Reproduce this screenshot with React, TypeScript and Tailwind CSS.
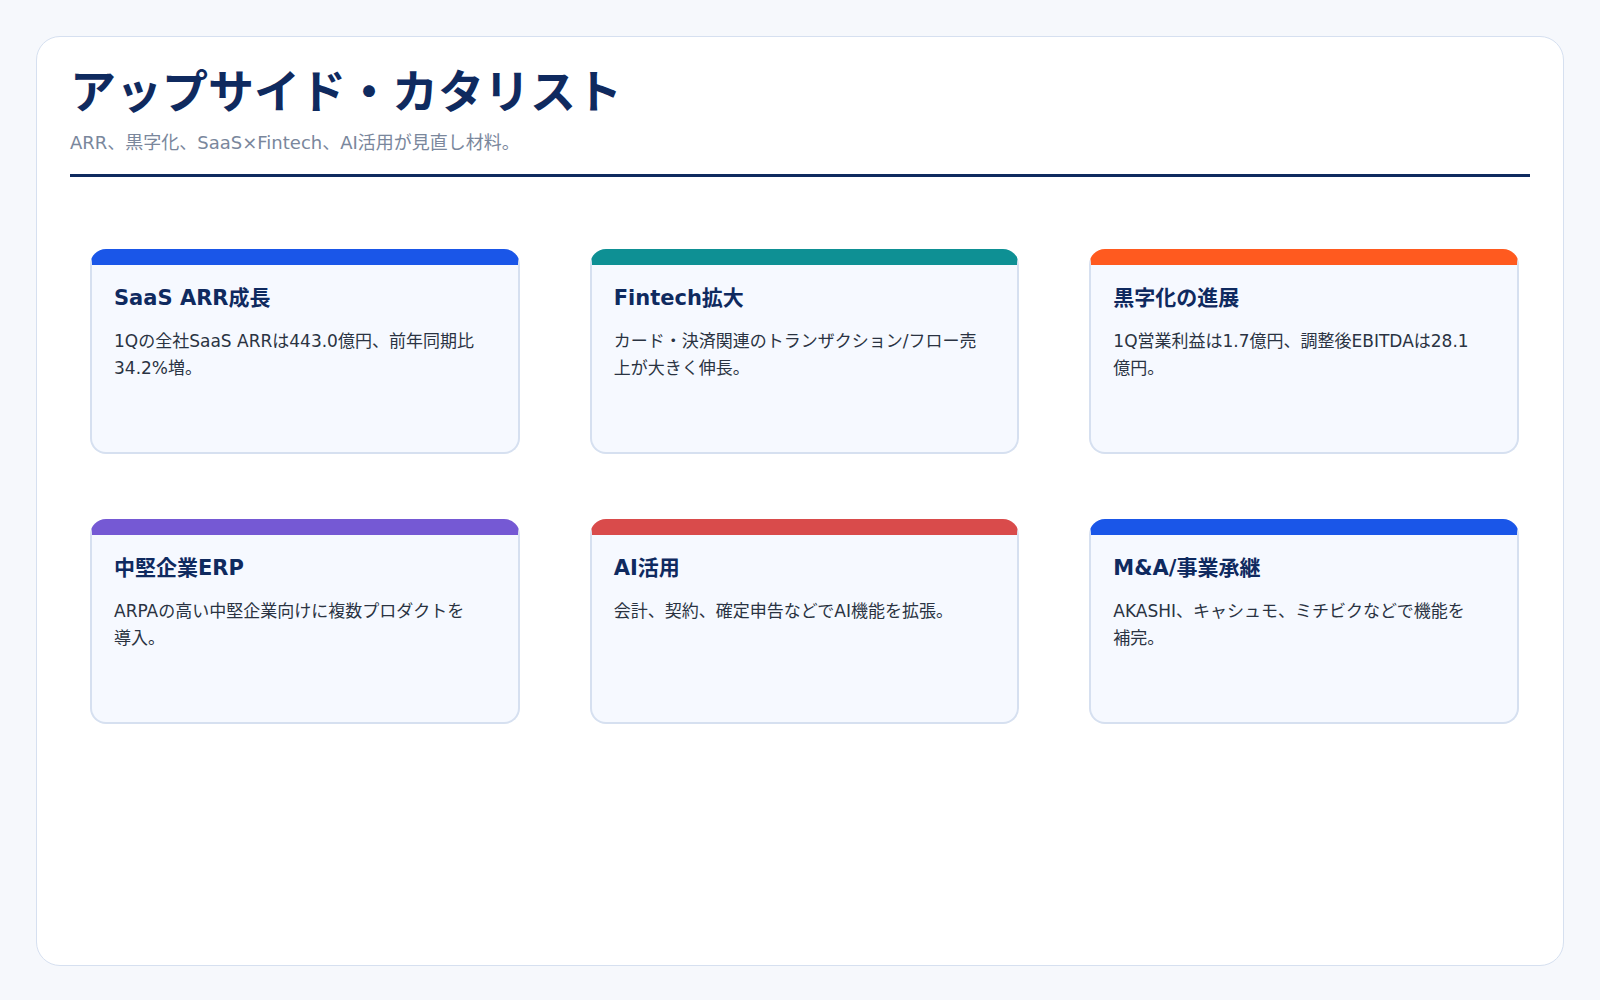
const cards = [
  { title: 'SaaS ARR成長', body: '1Qの全社SaaS ARRは443.0億円、前年同期比34.2%増。', color: 'border-t-[#1a56e8]' },
  { title: 'Fintech拡大', body: 'カード・決済関連のトランザクション/フロー売上が大きく伸長。', color: 'border-t-[#0e9094]' },
  { title: '黒字化の進展', body: '1Q営業利益は1.7億円、調整後EBITDAは28.1億円。', color: 'border-t-[#ff5a1f]' },
  { title: '中堅企業ERP', body: 'ARPAの高い中堅企業向けに複数プロダクトを導入。', color: 'border-t-[#7559d4]' },
  { title: 'AI活用', body: '会計、契約、確定申告などでAI機能を拡張。', color: 'border-t-[#d94b4b]' },
  { title: 'M&A/事業承継', body: 'AKASHI、キャシュモ、ミチビクなどで機能を補完。', color: 'border-t-[#1a56e8]' },
];

export default function App() {
  return (
    <div
      className="min-h-[1000px] bg-[#f6f8fc] p-[36px]"
      style={{ fontFamily: '"DejaVu Sans", "Noto Sans CJK JP", sans-serif' }}
    >
      <div className="h-[930px] rounded-[24px] border border-[#d6e0f0] bg-white px-[33px] pt-[26px]">
        <h1 className="text-[46px] font-bold leading-[1.3] text-[#0f2a5f]">アップサイド・カタリスト</h1>
        <p className="mt-[6px] text-[18px] text-[#7a879c]">ARR、黒字化、SaaS×Fintech、AI活用が見直し材料。</p>
        <div className="mt-[18px] h-[3px] bg-[#0f2a5f]" />
        <div className="mt-[72px] grid grid-cols-3 gap-x-[70px] gap-y-[65px] pl-[20px] pr-[11px]">
          {cards.map((c) => (
            <div
              key={c.title}
              className={`h-[205px] rounded-[16px] border-2 border-t-[16px] border-[#d6e0f0] bg-[#f6f9ff] px-[22px] pt-[18px] ${c.color}`}
            >
              <h3 className="text-[21px] font-bold text-[#0f2a5f]">{c.title}</h3>
              <p className="mt-[14px] break-all pr-[18px] text-[17px] leading-[27px] text-[#2a3342]">{c.body}</p>
            </div>
          ))}
        </div>
      </div>
    </div>
  );
}
